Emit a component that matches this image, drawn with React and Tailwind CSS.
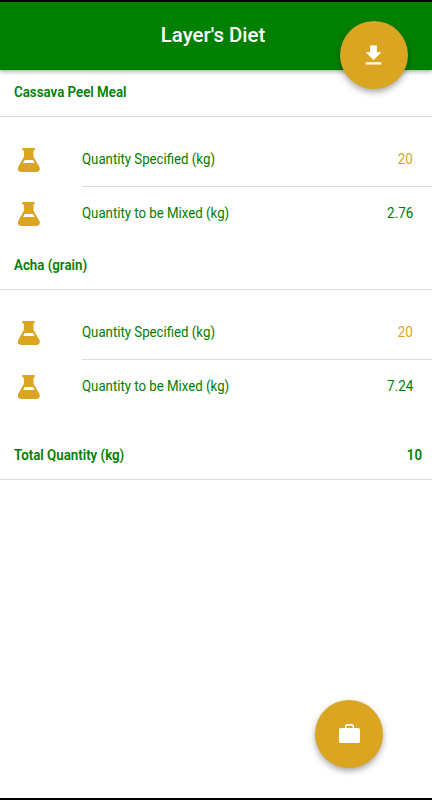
import React from 'react';

const feeds = [
  { name: 'Cassava Peel Meal', specified: '20', mixed: '2.76' },
  { name: 'Acha (grain)', specified: '20', mixed: '7.24' },
];

const FlaskIcon = () => (
  <svg viewBox="0 0 22 24" className="w-[22px] h-6" fill="#daa520">
    <path
      fillRule="evenodd"
      d="M4.300 0h12.400v2.600h-1.200v6.200l5.700 9.800c1.600 2.800.1 5.400-2.800 5.400H3.200C.3 24-1.200 21.400.4 18.600l5.500-9.800V2.600H4.300zM6.800 12l-1.700 3.100h11.600L15 12z"
    />
  </svg>
);

const DownloadIcon = () => (
  <svg viewBox="0 0 24 24" className="w-[27px] h-[27px] -translate-x-px" fill="white">
    <path d="M19 9h-4V3H9v6H5l7 7 7-7zM5 18v2h14v-2H5z" />
  </svg>
);

const BriefcaseIcon = () => (
  <svg viewBox="0 0 21 19" className="w-[21px] h-[19px] -translate-y-px" fill="white">
    <path
      fillRule="evenodd"
      d="M7.500 0h6l1.500 1.500V4h4.200c1 0 1.800.8 1.800 1.800v11.400c0 1-.8 1.800-1.800 1.800H1.800C.8 19 0 18.200 0 17.200V5.800C0 4.800.8 4 1.800 4H6V1.500zM7.500 1.800V4h6V1.800z"
    />
  </svg>
);

const SectionHeader = ({ title, value }) => (
  <div className="flex items-center justify-between h-[50px] pt-px pl-3.5 pr-2.5 border-b border-[#dcdcdc] text-[14px] font-semibold">
    <span className="origin-left scale-x-[0.95]">{title}</span>
    {value && <span className="origin-right scale-x-[0.95]">{value}</span>}
  </div>
);

const Row = ({ label, value, highlight, divider }) => (
  <div className="flex pl-[18px]">
    <div className="flex items-center w-16">
      <FlaskIcon />
    </div>
    <div
      className={`flex flex-1 items-center justify-between pr-[19px] text-[14px] ${
        divider ? 'h-[55px] border-b border-[#dcdcdc]' : 'h-[53px]'
      }`}
    >
      <span className="origin-left scale-x-[0.945]">{label}</span>
      <span className={`origin-right scale-x-[0.96] ${highlight ? 'text-[#daa520]' : ''}`}>
        {value}
      </span>
    </div>
  </div>
);

export default function App() {
  return (
    <div className="relative flex flex-col h-[800px] w-[432px] bg-white border-b-2 border-black font-[Roboto,sans-serif] text-[#008000] overflow-hidden">
      <header className="flex shrink-0 items-center justify-center h-[70px] border-t-2 border-black bg-[#008000] text-white text-[20.4px] font-medium shadow-[0_2px_4px_rgba(0,0,0,0.3)]">
        <h1 className="-translate-x-[3px] -translate-y-px">Layer&apos;s Diet</h1>
      </header>
      <main>
        {feeds.map((feed, i) => (
          <section key={feed.name} className={i === 0 ? '-mt-[3px]' : ''}>
            <SectionHeader title={feed.name} />
            <div className="pt-[15px]">
              <Row label="Quantity Specified (kg)" value={feed.specified} highlight divider />
              <Row label="Quantity to be Mixed (kg)" value={feed.mixed} />
            </div>
          </section>
        ))}
        <div className="mt-[17px]">
          <SectionHeader title="Total Quantity (kg)" value="10" />
        </div>
      </main>
      <button className="absolute left-[340px] top-[21px] flex items-center justify-center w-[68px] h-[68px] rounded-full bg-[#daa520] shadow-[0_3px_6px_rgba(0,0,0,0.35)]">
        <DownloadIcon />
      </button>
      <button className="absolute left-[315px] top-[700px] flex items-center justify-center w-[68px] h-[68px] rounded-full bg-[#daa520] shadow-[0_3px_6px_rgba(0,0,0,0.35)]">
        <BriefcaseIcon />
      </button>
    </div>
  );
}
